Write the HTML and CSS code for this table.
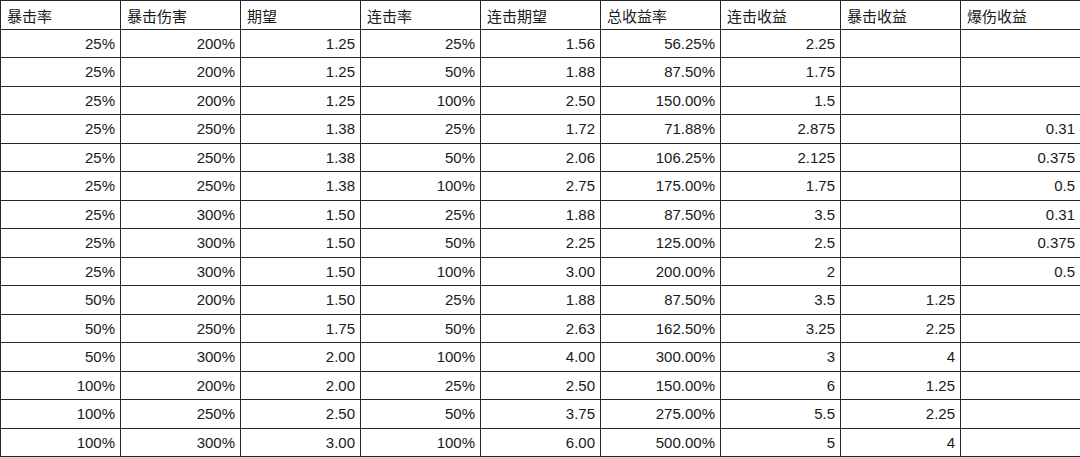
FILE: index.html
```html
<!DOCTYPE html>
<html lang="zh">
<head>
<meta charset="utf-8">
<link rel="stylesheet" href="styles.css">
</head>
<body>
<table class="sheet">
<thead>
<tr><th>暴击率</th><th>暴击伤害</th><th>期望</th><th>连击率</th><th>连击期望</th><th>总收益率</th><th>连击收益</th><th>暴击收益</th><th>爆伤收益</th></tr>
</thead>
<tbody>
<tr><td>25%</td><td>200%</td><td>1.25</td><td>25%</td><td>1.56</td><td>56.25%</td><td>2.25</td><td></td><td></td></tr>
<tr><td>25%</td><td>200%</td><td>1.25</td><td>50%</td><td>1.88</td><td>87.50%</td><td>1.75</td><td></td><td></td></tr>
<tr><td>25%</td><td>200%</td><td>1.25</td><td>100%</td><td>2.50</td><td>150.00%</td><td>1.5</td><td></td><td></td></tr>
<tr><td>25%</td><td>250%</td><td>1.38</td><td>25%</td><td>1.72</td><td>71.88%</td><td>2.875</td><td></td><td>0.31</td></tr>
<tr><td>25%</td><td>250%</td><td>1.38</td><td>50%</td><td>2.06</td><td>106.25%</td><td>2.125</td><td></td><td>0.375</td></tr>
<tr><td>25%</td><td>250%</td><td>1.38</td><td>100%</td><td>2.75</td><td>175.00%</td><td>1.75</td><td></td><td>0.5</td></tr>
<tr><td>25%</td><td>300%</td><td>1.50</td><td>25%</td><td>1.88</td><td>87.50%</td><td>3.5</td><td></td><td>0.31</td></tr>
<tr><td>25%</td><td>300%</td><td>1.50</td><td>50%</td><td>2.25</td><td>125.00%</td><td>2.5</td><td></td><td>0.375</td></tr>
<tr><td>25%</td><td>300%</td><td>1.50</td><td>100%</td><td>3.00</td><td>200.00%</td><td>2</td><td></td><td>0.5</td></tr>
<tr><td>50%</td><td>200%</td><td>1.50</td><td>25%</td><td>1.88</td><td>87.50%</td><td>3.5</td><td>1.25</td><td></td></tr>
<tr><td>50%</td><td>250%</td><td>1.75</td><td>50%</td><td>2.63</td><td>162.50%</td><td>3.25</td><td>2.25</td><td></td></tr>
<tr><td>50%</td><td>300%</td><td>2.00</td><td>100%</td><td>4.00</td><td>300.00%</td><td>3</td><td>4</td><td></td></tr>
<tr><td>100%</td><td>200%</td><td>2.00</td><td>25%</td><td>2.50</td><td>150.00%</td><td>6</td><td>1.25</td><td></td></tr>
<tr><td>100%</td><td>250%</td><td>2.50</td><td>50%</td><td>3.75</td><td>275.00%</td><td>5.5</td><td>2.25</td><td></td></tr>
<tr><td>100%</td><td>300%</td><td>3.00</td><td>100%</td><td>6.00</td><td>500.00%</td><td>5</td><td>4</td><td></td></tr>
</tbody>
</table>
</body>
</html>
```
FILE: styles.css
```css
html, body {
  margin: 0;
  padding: 0;
  background: #fff;
}
.sheet {
  border-collapse: collapse;
  table-layout: fixed;
  width: 1080px;
  font-family: "Liberation Sans", Arial, "Noto Sans CJK SC", sans-serif;
  font-size: 15px;
  color: #1a1a1a;
}
.sheet th,
.sheet td {
  border: 1px solid #262626;
  height: 28.5px;
  padding: 0 5px 0 6px;
  width: 120px;
  box-sizing: border-box;
  overflow: hidden;
  white-space: nowrap;
}
.sheet th {
  font-weight: normal;
  text-align: left;
  padding-top: 2px;
}
.sheet td {
  text-align: right;
}
```
